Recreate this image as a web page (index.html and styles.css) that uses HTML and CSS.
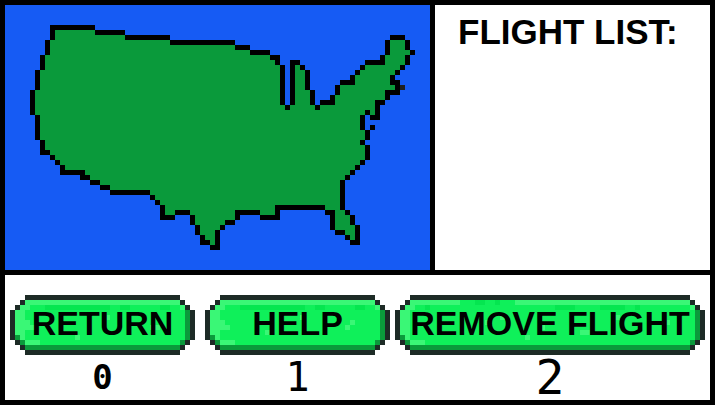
FILE: index.html
```html
<!DOCTYPE html>
<html lang="en">
<head>
<meta charset="utf-8">
<meta name="viewport" content="width=device-width, initial-scale=1">
<title>Flight List</title>
<link rel="stylesheet" href="styles.css">
</head>
<body>
<main class="screen">
  <section class="map" aria-label="Map">
    <svg class="map-art" viewBox="0.5 0.5 85 53" aria-hidden="true">
      <path class="land" d="M10 5H18L19 6H24L25 7H33L34 8H46L47 9H49L50 10H53L54 11H55V12L56 13V20L57 21L58 20V12H59L60 13L61 14V17L62 18V20L63 21L64 20H66V19L67 18V17L68 16H70V15L71 14L72 13L73 12H76V11L77 10V8L78 7H80L81 8V9L82 10L81 11V12L80 13L79 14L78 15V16H79V18H77V19L76 20H75V23H74L73 22L72 23V25L73 26V27L72 28L73 29V31L72 32L68 36V41L69 42L70 43V44L71 45V48H70L69 47L68 46H67L66 45V42H65L64 41H55V43H52L51 42H47V43L46 44H45L44 45L43 46V49H42L41 48H40V47L39 46V45L38 44V43L37 42H35L34 43H32V41L29 38H22L21 37H20L19 36H18L17 35H16V34H12V33L9 30H8V28L7 27V23L6 22V18L7 17V14L8 13V11L9 10V8L10 7Z"/>
      <path class="coast" d="M10 7V5H18M19 6H24M25 7H33M34 8H46M47 9H49M50 10H53M54 11H55V12M56 13V20M57 21h0M58 20V12H59M60 13h0M61 14V17M62 18V20M63 21h0M64 20H66V19M67 18V17M68 16H70V15M71 14h0M72 13h0M73 12H76V11M77 10V8M78 7H80M81 8V9M82 10h0M81 11V12M80 13h0M79 14h0M78 15V16H79V18H77V19M76 20H75V23H74M73 22h0M72 23V25M74 25h0M73 26V27M72 28h0M73 29V31M72 32h0M71 33h0M70 34h0M69 35h0M68 36V41M69 42h0M70 43V44M71 45V48H70M69 47h0M68 46H67M66 45V42H65M64 41H55V43H52M51 42H47V43M46 44H45M44 45h0M43 46V49H42M41 48H40V47M39 46V45M38 44V43M37 42H35M34 43H32V41M31 40h0M30 39h0M29 38H22M21 37H20M19 36H18M17 35H16V34H12V33M11 32h0M10 31h0M9 30H8V28M7 27V23M6 22V18M7 17V14M8 13V11M9 10V8"/>
      <path class="rock" d="M80 17h0"/>
    </svg>
  </section>

  <section class="flights">
    <h1 class="title">FLIGHT LIST:</h1>
  </section>

  <section class="controls" aria-label="Controls">
    <div class="control control-first">
      <button class="pixel-button" type="button" aria-describedby="key-return">
        <svg class="button-art" viewBox="0 0 37 12" preserveAspectRatio="none" aria-hidden="true">
          <path class="edge" d="M3 0H34V1H35V2H36V3H37V9H36V10H35V11H34V12H3V11H2V10H1V9H0V3H1V2H2V1H3Z"/>
          <path class="shade" d="M1 8H35V3H36V9H35V10H34V11H3V10H2V9H1Z"/>
          <path class="face" d="M3 1H34V2H35V9H34V10H3V9H2V8H1V3H2V2H3Z"/>
          <path class="dim" d="M7 2H20V3H7ZM22 2H24V3H22ZM30 2H32V3H30Z"/>
          <path class="shine" d="M3 1H34V2H35V3H34V2H4V3H3V5H4V6H5V7H3V9H6V10H3V9H2V8H1V3H2V2H3ZM19 4h1v1h-1ZM28 6h2v1h-2ZM13 8h1v1h-1Z"/>
        </svg>
        <span class="label">RETURN</span>
      </button>
      <span class="key key-small" id="key-return">0</span>
    </div>

    <div class="control">
      <button class="pixel-button" type="button" aria-describedby="key-help">
        <svg class="button-art" viewBox="0 0 37 12" preserveAspectRatio="none" aria-hidden="true">
          <path class="edge" d="M3 0H34V1H35V2H36V3H37V9H36V10H35V11H34V12H3V11H2V10H1V9H0V3H1V2H2V1H3Z"/>
          <path class="shade" d="M1 8H35V3H36V9H35V10H34V11H3V10H2V9H1Z"/>
          <path class="face" d="M3 1H34V2H35V9H34V10H3V9H2V8H1V3H2V2H3Z"/>
          <path class="dim" d="M7 2H20V3H7ZM22 2H24V3H22ZM30 2H32V3H30Z"/>
          <path class="shine" d="M3 1H34V2H35V3H34V2H4V3H3V5H4V6H5V7H3V9H6V10H3V9H2V8H1V3H2V2H3ZM19 4h1v1h-1ZM29 5h1v1h-1ZM28 6h1v1h-1ZM12 7h1v1h-1Z"/>
        </svg>
        <span class="label">HELP</span>
      </button>
      <span class="key key-medium" id="key-help">1</span>
    </div>

    <div class="control">
      <button class="pixel-button" type="button" aria-describedby="key-remove">
        <svg class="button-art" viewBox="0 0 62 12" preserveAspectRatio="none" aria-hidden="true">
          <path class="edge" d="M3 0H59V1H60V2H61V3H62V9H61V10H60V11H59V12H3V11H2V10H1V9H0V3H1V2H2V1H3Z"/>
          <path class="shade" d="M1 8H60V3H61V9H60V10H59V11H3V10H2V9H1Z"/>
          <path class="face" d="M3 1H59V2H60V9H59V10H3V9H2V8H1V3H2V2H3Z"/>
          <path class="dim" d="M6 2H7V3H6ZM16 1H18V2H16ZM20 1H21V2H20ZM32 2H36V3H32ZM41 2H46V3H41ZM48 2H49V3H48Z"/>
          <path class="shine" d="M3 1H13V2H4V3H3V9H6V10H3V9H2V8H1V3H2V2H3ZM24 1H59V2H60V3H59V2H24ZM21 4h1v1h-1ZM18 5h1v1h-1ZM29 6h1v1h-1ZM26 8h1v1h-1ZM37 7h2v1h-2ZM44 4h1v1h-1ZM54 5h1v1h-1Z"/>
        </svg>
        <span class="label">REMOVE FLIGHT</span>
      </button>
      <span class="key key-large" id="key-remove">2</span>
    </div>
  </section>
</main>
</body>
</html>
```
FILE: styles.css
```css
* {
  box-sizing: border-box;
}

body {
  margin: 0;
  background: #000;
  color: #000;
  font-family: "Liberation Sans", Arial, sans-serif;
}

.screen {
  display: grid;
  grid-template-columns: 85fr 55fr;
  grid-template-rows: auto 1fr;
  gap: 5px;
  min-height: 100vh;
  padding: 5px;
}

.map {
  background: #165bf4;
}

.map-art {
  display: block;
  width: 100%;
  shape-rendering: crispEdges;
}

.land {
  fill: #0a9a3b;
}

.coast,
.rock {
  fill: none;
  stroke: #000;
  stroke-width: 1;
  stroke-linecap: square;
  stroke-linejoin: miter;
}

.rock {
  stroke: #1f1f1f;
}

.flights {
  padding: 7px 23px;
  background: #fff;
}

.title {
  margin: 0;
  font-size: 35px;
  line-height: 40px;
  white-space: nowrap;
}

.controls {
  display: grid;
  grid-column: 1 / -1;
  grid-template-columns: 38fr 37fr 62fr;
  gap: 5px;
  padding: 20px 5px 0;
  background: #fff;
}

.control {
  display: flex;
  flex-direction: column;
  min-width: 0;
}

.control-first {
  padding-right: 5px;
}

.pixel-button {
  position: relative;
  width: 100%;
  height: 60px;
  padding: 0 0 4px;
  border: 0;
  background: none;
  color: #000;
  font: bold 34px/40px "Liberation Sans", Arial, sans-serif;
  white-space: nowrap;
  cursor: pointer;
}

.button-art {
  position: absolute;
  inset: 0;
  width: 100%;
  height: 100%;
  shape-rendering: crispEdges;
}

.label {
  position: relative;
}

.edge {
  fill: #1d2b26;
}

.shade {
  fill: #0a9a3b;
}

.face {
  fill: #0ff05a;
}

.dim {
  fill: #05e650;
}

.shine {
  fill: #3af776;
}

.key {
  text-align: center;
  font-family: "DejaVu Sans Mono", monospace;
  line-height: 44px;
}

.key-small {
  font-size: 34px;
  font-weight: bold;
}

.key-medium {
  font-size: 40px;
}

.key-large {
  font-size: 48px;
}
```
